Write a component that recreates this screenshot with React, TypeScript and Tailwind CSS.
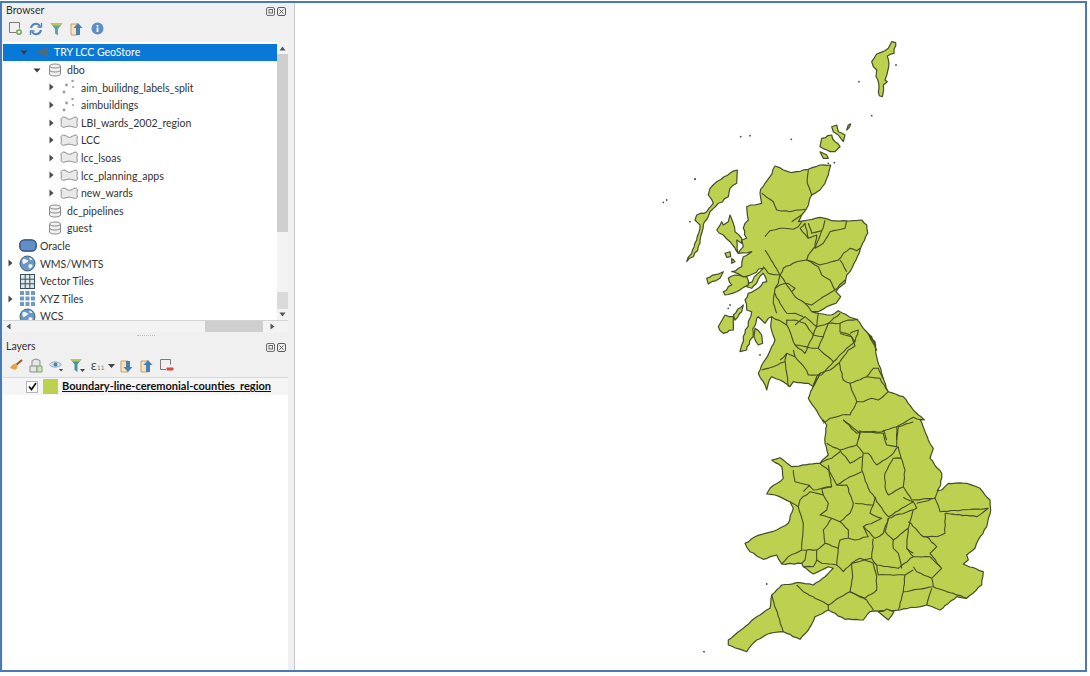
import * as React from "react"

// coastline and boundary points were read off 3x crops, so each list keeps the origin of its crop
function at(ox: number, oy: number, s: string) {
  return s.trim().split(/\s+/).map((p) => {
    const [x, y] = p.split(",").map(Number)
    return `${(x / 3 + ox).toFixed(1)},${(y / 3 + oy).toFixed(1)}`
  }).join(" ")
}
const z4 = (s: string) => at(650, 30, s)
const z5 = (s: string) => at(740, 220, s)
const z6 = (s: string) => at(700, 420, s)
const z7 = (s: string) => at(680, 160, s)

// breaks long straight runs into a crinkled line, seeded so it stays the same on each render
function crinkle(points: string, amp: number, seed: number) {
  const pts = points.trim().split(/\s+/).map((p) => p.split(",").map(Number))
  let n = seed
  const rnd = () => {
    n = (n * 9301 + 49297) % 233280
    return n / 233280 - 0.5
  }
  const out: string[] = []
  pts.forEach((p, i) => {
    out.push(`${p[0]},${p[1]}`)
    const q = pts[i + 1]
    if (!q) return
    const steps = Math.floor(Math.hypot(q[0] - p[0], q[1] - p[1]) / 3.5)
    for (let k = 1; k < steps; k++) {
      const t = k / steps
      out.push(`${(p[0] + (q[0] - p[0]) * t + rnd() * amp * 2).toFixed(1)},${(p[1] + (q[1] - p[1]) * t + rnd() * amp * 2).toFixed(1)}`)
    }
  })
  return out.join(" ")
}

const mainland = [
  crinkle([
    z7("270,50 285,18 310,30 335,38 385,28 420,15 452,15 445,45 435,70 420,90 395,105 380,145 365,165 355,185 385,180 420,172 455,182 490,182 520,182 545,180 560,195 563,220 548,250 540,270 528,300 510,335 500,345 495,370 475,385 468,395 482,410 468,430 440,440 415,455 395,455 430,462 455,465 475,452 495,462 510,472 530,478 550,505 575,530 590,570"),
    z5("380,335 405,365 410,410 428,470 445,515 490,530 525,575 553,600 540,598 565,660"),
    z6("700,85 690,115 725,160 722,195 712,212 725,210 745,190 800,190 840,205 870,240 872,270 860,320 835,360 825,385 800,405 805,420 790,432 850,455 845,495 800,535 770,530 720,570 680,555 600,570 580,572 545,572 510,575 490,600 435,598 385,570 345,590 325,630 300,658 250,635 210,640 170,660 140,695 85,675 85,660 130,625 170,590 210,565 215,525 245,495 300,488 340,495 375,470 400,445 385,440 365,450 340,462 310,440 305,430 245,432 230,405 190,418 150,395 135,370 165,350 230,330 265,310 280,265 270,245 225,225 200,222 210,205 250,175 245,140 215,120 240,113 275,140 360,130 385,105 375,70 380,15 370,0"),
    z5("250,605 205,535 230,470 240,460"),
    z7("400,680 385,670 340,665 330,680 300,660 275,650 265,670 260,690 250,665 235,640 245,615 262,590 285,540 272,500"),
  ].join(" "), 0.55, 17),
  // the west coast of scotland is far more broken than the rest
  crinkle(z7("272,500 275,470 265,475 255,490 245,480 235,470 230,475 220,520 200,570 180,575 185,555 195,520 205,485 215,455 200,450 195,420 205,400 260,365 250,340 215,385 200,380 240,335 250,325 195,350 155,335 185,320 190,290 215,275 175,280 190,260 185,240 200,235 190,205 205,180 200,140 225,135 245,130 240,100 255,70"), 1.3, 5),
].join(" ")

const islands = [
  z7("172,30 150,40 110,65 90,85 85,105 100,130 80,155 50,165 45,180 60,195 50,240 35,280 20,305 40,290 60,250 70,195 90,155 115,130 145,110 150,85 170,70"),
  z7("150,165 160,190 165,215 185,235 185,250 170,240 175,280 150,245 130,225 110,210 125,185 130,195 145,185"),
  z7("135,465 160,470 160,510 130,520 115,500"),
  z7("160,465 190,435 185,455 165,480"),
  z7("80,355 130,335 120,355 85,372"),
  z7("135,280 150,275 152,290 140,292"),
  z7("155,295 165,305 155,310"),
  z7("225,505 245,525 248,550 235,555 222,530"),
  z7("130,395 155,375 145,355 165,345 200,350 205,375 170,395 135,405"),
  z4("515,325 545,315 555,335 570,350 555,365 530,360 510,350"),
  z4("510,365 530,375 535,385 520,385"),
  z4("545,290 560,285 565,305 585,315 580,335 565,315 550,305"),
  z4("595,285 602,282 598,292 590,300"),
  z4("725,35 737,38 732,70 712,78 716,110 705,150 712,155 700,165 697,200 688,197 686,160 678,140 680,120 665,95 680,72 705,62 715,55"),
  z6("535,575 560,567 582,575 565,600"),
]

const specks = [
  z4("627,155"), z4("665,257"), z4("300,317"), z4("272,320"), z4("424,328"), z4("135,447"), z4("40,517"), z4("50,510"),
  z4("738,105"), z4("600,283"), z4("553,398"), z4("535,400"), z6("12,695"), z6("200,492"), z7("45,58"), z7("30,185"),
  z7("160,300"), z7("150,435"), z7("145,445"), z7("240,585"),
]

const boundaries = [
  // scotland
  z7("385,28 382,70 395,105"),
  z7("245,100 280,125 290,150 330,155 350,150 375,148"),
  z7("255,230 270,212 300,205 340,208 355,200 365,185"),
  z7("335,185 350,175 365,165"),
  z7("360,205 385,235 410,225 405,260 385,285 380,300"),
  z7("360,205 375,190 385,235"),
  z7("385,190 395,220 425,212 435,180"),
  z7("425,212 410,250 405,265 430,250 450,215 495,205 500,182"),
  z7("380,300 420,315 475,300 490,280 510,265 530,272 540,265"),
  z7("480,300 500,335"),
  z7("415,320 425,345 450,360 465,390 495,360"),
  z7("255,270 300,345 310,325 350,305 380,300 415,320"),
  z7("250,320 265,340 300,345 295,370 285,385 280,430 290,460"),
  z7("300,345 335,395 345,410 375,430 395,435 430,410 465,390"),
  z7("375,430 385,440 395,455"),
  z7("285,385 300,375 325,370 345,385 335,395"),
  z7("285,400 300,430 320,460 345,460 370,470"),
  z7("275,470 320,495 330,515 345,555 375,580 400,525 375,490 345,480 320,480 320,495"),
  z7("345,495 375,470 410,500 445,490 480,460"),
  z7("415,460 410,500 400,525 430,530 445,490 480,490 505,480 535,478"),
  z7("430,530 415,565 460,605 485,580 525,545 510,525 480,515 480,490"),
  z7("525,545 535,510 510,520"),
  z7("345,555 400,565 415,565"),
  z7("340,570 345,590 375,625 385,645 425,645 460,605"),
  z7("320,580 315,600 320,640 325,680"),
  z7("245,630 280,620 315,605"),
  z7("345,590 320,580 300,600"),
  // northern england
  z5("240,460 270,450 298,428 310,480 330,490 335,510 350,545 330,585 305,585 270,595 250,610"),
  z5("298,428 325,390 345,378 335,350 300,340"),
  z5("330,490 380,470 420,475 445,515 415,540 395,535 370,545 350,545"),
  z5("380,470 400,445 415,445 428,475"),
  z5("310,600 350,640 365,635 425,635 470,620 490,610 520,592 545,600"),
  z5("360,630 355,660"),
  z5("430,630 440,660"),
  z5("470,620 470,660"),
  // midlands and south
  z6("380,70 420,90 470,75 480,40 430,0"),
  z6("480,35 550,40 560,75 590,80 595,20 640,5"),
  z6("470,75 490,100 485,150 505,205 525,235 520,255"),
  z6("490,100 505,100 530,135 575,105 595,80"),
  z6("595,80 615,150 610,200 565,225 555,200 555,160 580,115 605,115"),
  z6("360,130 395,115 420,95"),
  z6("420,90 450,130 485,110"),
  z6("360,130 385,150 410,195 450,170 485,155"),
  z6("280,150 285,185 325,195 340,210 395,200 385,135"),
  z6("310,215 330,195"),
  z6("270,245 295,260 300,240 330,215 370,225 385,250 380,270 360,285 395,295 420,305 450,280 460,250 440,195 410,195"),
  z6("370,225 365,205 395,200"),
  z6("295,260 310,310 305,390 350,390 375,370 370,330 395,295"),
  z6("305,390 265,410 245,432"),
  z6("320,390 315,420 305,430"),
  z6("350,390 350,420 340,440 310,440"),
  z6("350,420 365,430 410,435"),
  z6("375,370 415,385 420,360 445,355 445,330 420,305"),
  z6("415,385 410,435 430,455 455,430 515,415"),
  z6("445,355 465,360 505,350 490,320 545,295 510,280 520,255 465,250"),
  z6("490,320 525,355 550,340 565,295"),
  z6("525,230 530,245 565,290 605,265 640,245 610,232"),
  z6("640,245 650,265 565,295 555,335 580,360 625,325 640,270"),
  z6("625,325 620,385 640,400"),
  z6("610,200 635,240 705,235 715,210"),
  z6("705,235 720,275 865,265"),
  z6("735,280 830,290 865,265"),
  z6("650,250 705,235"),
  z6("735,280 735,340 710,350 670,350"),
  z6("625,305 670,350 680,350 710,380 690,400 720,440"),
  z6("520,355 515,415 530,435 595,445 640,410 620,385"),
  z6("580,360 580,385 595,400 605,445"),
  z6("640,410 690,410 725,445 695,475 650,455 640,440"),
  z6("530,435 535,465 615,465 640,450"),
  z6("455,430 480,415 520,430 530,470 530,510 495,535 450,515 458,470 455,430"),
  z6("615,465 610,515 700,500 695,475"),
  z6("700,500 800,535"),
  z6("610,515 595,570"),
  z6("695,505 680,555"),
  z6("450,515 500,540 520,570"),
  z6("290,495 310,515 385,555 440,520 450,515"),
  z6("385,570 385,555"),
  z6("215,525 245,620 250,635"),
]

function UkMap() {
  return (
    <svg viewBox="295 3 790 667" className="block h-full w-full">
      <g fill="#bdd04f" stroke="#434e2a" strokeWidth="1.200" strokeLinejoin="round">
        <polygon points={mainland} />
        {islands.map((p, i) => <polygon key={i} points={crinkle(p, 1, i + 3)} />)}
      </g>
      <g fill="none" stroke="#434e2a" strokeWidth="1.100" strokeLinejoin="round">
        {boundaries.map((p, i) => <polyline key={i} points={crinkle(p, 0.5, i + 31)} />)}
      </g>
      <g fill="#4a4f55">
        {specks.map((p, i) => {
          const [x, y] = p.split(",").map(Number)
          return <circle key={i} cx={x} cy={y} r="0.9" />
        })}
      </g>
    </svg>
  )
}

function Arrow({ open }: { open?: boolean }) {
  return open ? (
    <svg width="8" height="8" viewBox="0 0 8 8"><path d="M0.5 2.5h7L4 6.5z" fill="#3c3c3c" /></svg>
  ) : (
    <svg width="8" height="8" viewBox="0 0 8 8"><path d="M2.5 0.5v7L6.5 4z" fill="#4a4a4a" /></svg>
  )
}

const DbIcon = () => (
  <svg width="14" height="14" viewBox="0 0 14 14" fill="#f0f0f0" stroke="#8c8c8c">
    <path d="M1.5 3v8c0 1.2 2.4 2 5.5 2s5.5-.8 5.5-2V3" />
    <ellipse cx="7" cy="3" rx="5.5" ry="2" />
    <path d="M1.5 7c0 1.2 2.4 2 5.5 2s5.5-.8 5.5-2" fill="none" />
  </svg>
)

const PointsIcon = () => (
  <svg width="16" height="16" viewBox="0 0 16 16" fill="#9a9a9a">
    <circle cx="11.5" cy="2" r="1.2" /><circle cx="5.5" cy="6" r="1.4" /><circle cx="12" cy="8" r="1" /><circle cx="3" cy="13" r="1.4" />
  </svg>
)

const PolyIcon = () => (
  <svg width="18" height="13" viewBox="0 0 18 13" fill="#e9e9e9" stroke="#8e8e8e">
    <path d="M1 4C.6 1.500 3 .6 5 1.300c1.500.6 2.500 2 4.500 2s3.500-1.800 5.500-2.200c2-.4 2.700 1.200 2.300 3-.4 1.800-.5 3 0 4.700.5 2-1 3-3 2.500-2-.5-3.500-1.200-5.500-1.200s-3.500 1.200-5.300 1.200C1.700 11.300.6 10 1.200 8.300 1.600 7 1.300 5.500 1 4z" />
  </svg>
)

const GeoIcon = () => (
  <svg width="14" height="12" viewBox="0 0 14 12"><path d="M0.5 6L13 1v10z" fill="#4f6b7d" /></svg>
)

const OracleIcon = () => (
  <svg width="18" height="13" viewBox="0 0 18 13"><rect x="0.8" y="0.8" width="16.400" height="11.400" rx="4.500" fill="#5f8fc9" stroke="#2d4a6e" strokeWidth="1.300" /></svg>
)

const GlobeIcon = () => (
  <svg width="17" height="17" viewBox="0 0 17 17">
    <circle cx="8.500" cy="8.500" r="7.500" fill="#6b97c2" stroke="#3d5f80" />
    <path d="M4 4c2-1 3 1 4.500 1S9 7 7.500 7.500 5 10 4 8.500 3 5 4 4zM10 9.500c1.500-.5 3-.5 3.500.5s-1 3-2.500 3.500-2-3.500-1-4z" fill="#eef3f7" />
    <path d="M10 2.500c1.500 0 3 1 3.500 2.500L11 5z" fill="#eef3f7" />
  </svg>
)

const VectorIcon = () => (
  <svg width="15" height="15" viewBox="0 0 15 15" fill="#dfe6ea" stroke="#35505f">
    <rect x="0.500" y="0.500" width="14" height="14" />
    <path d="M5.200 0.500v14M9.800 0.500v14M0.500 5.200h14M0.500 9.800h14" fill="none" />
  </svg>
)

const XyzIcon = () => (
  <svg width="15" height="15" viewBox="0 0 15 15" fill="#6d9ac6">
    {[0, 5.500, 11].map((x) => [0, 5.500, 11].map((y) => <rect key={`${x}-${y}`} x={x} y={y} width="4" height="4" />))}
  </svg>
)

interface TreeRowProps {
  level: 0 | 1 | 2 | 3
  arrow?: "open" | "closed"
  icon: React.ReactNode
  label: string
  selected?: boolean
}

const levelPad = ["pl-[2px]", "pl-[16px]", "pl-[29px]", "pl-[43px]"]

function TreeRow({ level, arrow, icon, label, selected }: TreeRowProps) {
  return (
    <div className={`flex h-[17.6px] shrink-0 items-center ${levelPad[level]} ${selected ? "bg-[#0a78d7] text-white" : "text-[#333]"}`}>
      <span className="flex w-[10px] justify-center">{arrow && <Arrow open={arrow === "open"} />}</span>
      <span className="flex w-[25px] justify-center">{icon}</span>
      <span className="whitespace-nowrap pt-[2px]">{label}</span>
    </div>
  )
}

function DockButtons() {
  return (
    <div className="flex gap-[2px]">
      <svg width="9" height="9" viewBox="0 0 9 9" fill="none" stroke="#6e6e6e"><rect x="0.500" y="0.500" width="8" height="8" rx="1.500" /><rect x="3" y="2.500" width="3.500" height="3.500" /></svg>
      <svg width="9" height="9" viewBox="0 0 9 9" fill="none" stroke="#5a5a5a"><rect x="0.500" y="0.500" width="8" height="8" rx="1.500" /><path d="M2.500 2.500l4 4M6.500 2.500l-4 4" /></svg>
    </div>
  )
}

const ScrollUp = () => <svg width="7" height="5" viewBox="0 0 7 5"><path d="M3.500 0.500L6.500 4.500H0.500z" fill="#555" /></svg>
const ScrollDown = () => <svg width="7" height="5" viewBox="0 0 7 5"><path d="M3.500 4.500L6.500 0.500H0.500z" fill="#555" /></svg>
const ScrollLeft = () => <svg width="5" height="7" viewBox="0 0 5 7"><path d="M0.500 3.500L4.500 0.500v6z" fill="#555" /></svg>
const ScrollRight = () => <svg width="5" height="7" viewBox="0 0 5 7"><path d="M4.500 3.500L0.500 0.500v6z" fill="#555" /></svg>

const UpDoc = ({ down }: { down?: boolean }) => (
  <svg width="14" height="14" viewBox="0 0 14 14">
    <path d="M1 2h7v11H1z" fill="#f4e3bf" stroke="#c9a163" />
    {down
      ? <path d="M8 13L3.500 8H6V2h4v6h2.500z" fill="#4a7fb5" />
      : <path d="M8 1l4.500 5H10v7H6V6H3.500z" fill="#4a7fb5" />}
  </svg>
)

const BrowserTools = () => (
  <div className="flex h-[19px] items-center pl-[2px]">
    <span className="flex w-[20.500px] justify-center">
      <svg width="13" height="13" viewBox="0 0 13 13" fill="none"><path d="M7 10.500H.5V.5h10v6" stroke="#7b7b7b" /><circle cx="10" cy="10" r="2.200" stroke="#5d9b3f" strokeWidth="1.300" fill="#fff" /></svg>
    </span>
    <span className="flex w-[20.500px] justify-center">
      <svg width="14" height="14" viewBox="0 0 14 14" fill="none" stroke="#4f83b8" strokeWidth="2"><path d="M2 6a5 5 0 0 1 9-2" /><path d="M12 8a5 5 0 0 1-9 2" /><path d="M12.500 1v4h-4M1.500 13V9h4" strokeWidth="1.400" /></svg>
    </span>
    <span className="flex w-[20.500px] justify-center">
      <svg width="13" height="14" viewBox="0 0 13 14"><path d="M0.500 1h12L8 7v6.500L5 11.500V7z" fill="#5fa3a0" /><path d="M0.500 1h12L10.500 3.500h-8z" fill="#b9c65a" /></svg>
    </span>
    <span className="flex w-[20.500px] justify-center"><UpDoc /></span>
    <span className="flex w-[20.500px] justify-center">
      <svg width="13" height="13" viewBox="0 0 13 13"><circle cx="6.500" cy="6.500" r="6" fill="#5d8ec4" /><rect x="5.600" y="5.500" width="1.800" height="4.500" fill="#fff" /><rect x="5.600" y="3" width="1.800" height="1.600" fill="#fff" /></svg>
    </span>
  </div>
)

const LayerTools = () => (
  <div className="flex h-[19px] items-center pl-[4px]">
    <span className="flex w-[18px] justify-center">
      <svg width="14" height="13" viewBox="0 0 14 13"><path d="M13 1L7 6" stroke="#8a5a2a" strokeWidth="2" /><path d="M7 4.500c-2 0-4 1.500-6 4 2.500 2 5.500 3 6.500 1.500s1-3 .5-4z" fill="#e0a64a" /></svg>
    </span>
    <span className="flex w-[22px] justify-center">
      <svg width="14" height="15" viewBox="0 0 14 15" fill="#e6e6e6" stroke="#8d8d8d"><path d="M3 8V2.500L7 1l4 1.500V8" /><path d="M1 8h7v6H1z" /><path d="M8 8h5v6H8z" fill="#cfe3c4" stroke="#7da36a" /></svg>
    </span>
    <span className="flex w-[19px] justify-center">
      <svg width="15" height="13" viewBox="0 0 15 13"><path d="M0.500 5.500C3 2 9 2 12.500 5.500 9 9 3 9 0.500 5.500z" fill="#dbe6ef" stroke="#8da6bb" /><circle cx="6.500" cy="5.500" r="2" fill="#4f7ea8" /><path d="M10 10h4l-2 2.500z" fill="#444" /></svg>
    </span>
    <span className="flex w-[22px] justify-center">
      <svg width="15" height="15" viewBox="0 0 15 15"><path d="M0.500 1h11L7.500 6.500V14L4.500 12V6.500z" fill="#4f8f9c" /><path d="M0.500 1h11L9.500 3.500h-7z" fill="#b9c65a" /><path d="M10 11h5l-2.500 3z" fill="#444" /></svg>
    </span>
    <span className="flex w-[19px] justify-center">
      <span className="font-['DejaVu_Sans'] text-[12px] leading-none text-[#555]">ε<span className="text-[6px] text-[#777]">11</span></span>
    </span>
    <span className="flex w-[8px] justify-center">
      <svg width="7" height="4" viewBox="0 0 7 4"><path d="M0 0h7L3.500 4z" fill="#444" /></svg>
    </span>
    <span className="ml-[2px] flex w-[20px] justify-center"><UpDoc down /></span>
    <span className="flex w-[20px] justify-center"><UpDoc /></span>
    <span className="flex w-[19px] justify-center">
      <svg width="14" height="14" viewBox="0 0 14 14" fill="none"><path d="M6 10.500H.5V.5h10v5" stroke="#7b7b7b" /><rect x="6.500" y="8.500" width="7" height="3" rx="1" fill="#d8493f" /></svg>
    </span>
  </div>
)

function TreeBox() {
  return (
    <div className="flex h-[290px] flex-col">
      <div className="flex h-[278px] min-h-0">
        <div className="flex w-[275px] flex-col overflow-hidden bg-white pt-[1.500px] text-[10.500px]">
          <TreeRow level={1} arrow="open" icon={<GeoIcon />} label="TRY LCC GeoStore" selected />
          <TreeRow level={2} arrow="open" icon={<DbIcon />} label="dbo" />
          <TreeRow level={3} arrow="closed" icon={<PointsIcon />} label="aim_builidng_labels_split" />
          <TreeRow level={3} arrow="closed" icon={<PointsIcon />} label="aimbuildings" />
          <TreeRow level={3} arrow="closed" icon={<PolyIcon />} label="LBI_wards_2002_region" />
          <TreeRow level={3} arrow="closed" icon={<PolyIcon />} label="LCC" />
          <TreeRow level={3} arrow="closed" icon={<PolyIcon />} label="lcc_lsoas" />
          <TreeRow level={3} arrow="closed" icon={<PolyIcon />} label="lcc_planning_apps" />
          <TreeRow level={3} arrow="closed" icon={<PolyIcon />} label="new_wards" />
          <TreeRow level={2} icon={<DbIcon />} label="dc_pipelines" />
          <TreeRow level={2} icon={<DbIcon />} label="guest" />
          <TreeRow level={0} icon={<OracleIcon />} label="Oracle" />
          <TreeRow level={0} arrow="closed" icon={<GlobeIcon />} label="WMS/WMTS" />
          <TreeRow level={0} icon={<VectorIcon />} label="Vector Tiles" />
          <TreeRow level={0} arrow="closed" icon={<XyzIcon />} label="XYZ Tiles" />
          <TreeRow level={0} icon={<GlobeIcon />} label="WCS" />
        </div>
        <div className="flex w-[11px] flex-col bg-[#f3f3f3]">
          <div className="flex h-[12px] items-center justify-center"><ScrollUp /></div>
          <div className="h-[178px] bg-[#cfcfcf]" />
          <div className="h-[60px]" />
          <div className="h-[17px] bg-[#dadada]" />
          <div className="flex-1" />
          <div className="flex h-[11px] items-center justify-center"><ScrollDown /></div>
        </div>
      </div>
      <div className="flex h-[12px] border-t border-[#d4d4d4] bg-[#f3f3f3]">
        <div className="flex w-[11px] items-center justify-center"><ScrollLeft /></div>
        <div className="w-[191px]" />
        <div className="w-[58px] bg-[#cfcfcf]" />
        <div className="w-[3px]" />
        <div className="flex w-[12px] items-center justify-center"><ScrollRight /></div>
      </div>
    </div>
  )
}

export default function App() {
  return (
    <div className="h-[676px] w-[1090px] overflow-hidden bg-white pt-[1px] font-['Lato','Open_Sans',sans-serif]">
      <div className="flex h-[671px] w-[1087px] border-2 border-[#4a79b5]">
        <div className="flex w-[286px] shrink-0 flex-col bg-[#f0f0f0] pl-[1px]">
          <div className="flex h-[16px] items-center justify-between pl-[3px] pr-[2px] text-[10.500px] text-[#333]">
            <span>Browser</span>
            <DockButtons />
          </div>
          <BrowserTools />
          <div className="mt-[4px]"><TreeBox /></div>
          <div className="flex h-[7px] items-center justify-center">
            <div className="h-[1px] w-[18px] border-t border-dotted border-[#bdbdbd]" />
          </div>
          <div className="flex h-[16px] items-center justify-between pl-[3px] pr-[2px] text-[10.500px] text-[#333]">
            <span>Layers</span>
            <DockButtons />
          </div>
          <div className="mt-[1px]"><LayerTools /></div>
          <div className="mt-[2px] flex min-h-0 flex-1 flex-col border-t border-[#d8d8d8] bg-white">
            <div className="flex h-[17px] items-center bg-[#f5f5f5] pl-[23px]">
              <span className="flex h-[12px] w-[12px] items-center justify-center border border-[#b5b5b5] bg-white">
                <svg width="9" height="9" viewBox="0 0 9 9" fill="none" stroke="#111" strokeWidth="1.700"><path d="M1 4.500l2.500 3L8 1" /></svg>
              </span>
              <span className="ml-[5px] h-[15px] w-[15px] bg-[#bdd04f]" />
              <span className="ml-[4px] whitespace-nowrap text-[11px] font-bold text-[#111] underline">Boundary-line-ceremonial-counties_region</span>
            </div>
          </div>
        </div>
        <div className="flex h-full w-[6px] shrink-0 bg-[#f0f0f0]" />
        <div className="min-w-0 flex-1 border-l border-[#c8c8c8] bg-white">
          <UkMap />
        </div>
      </div>
    </div>
  )
}
